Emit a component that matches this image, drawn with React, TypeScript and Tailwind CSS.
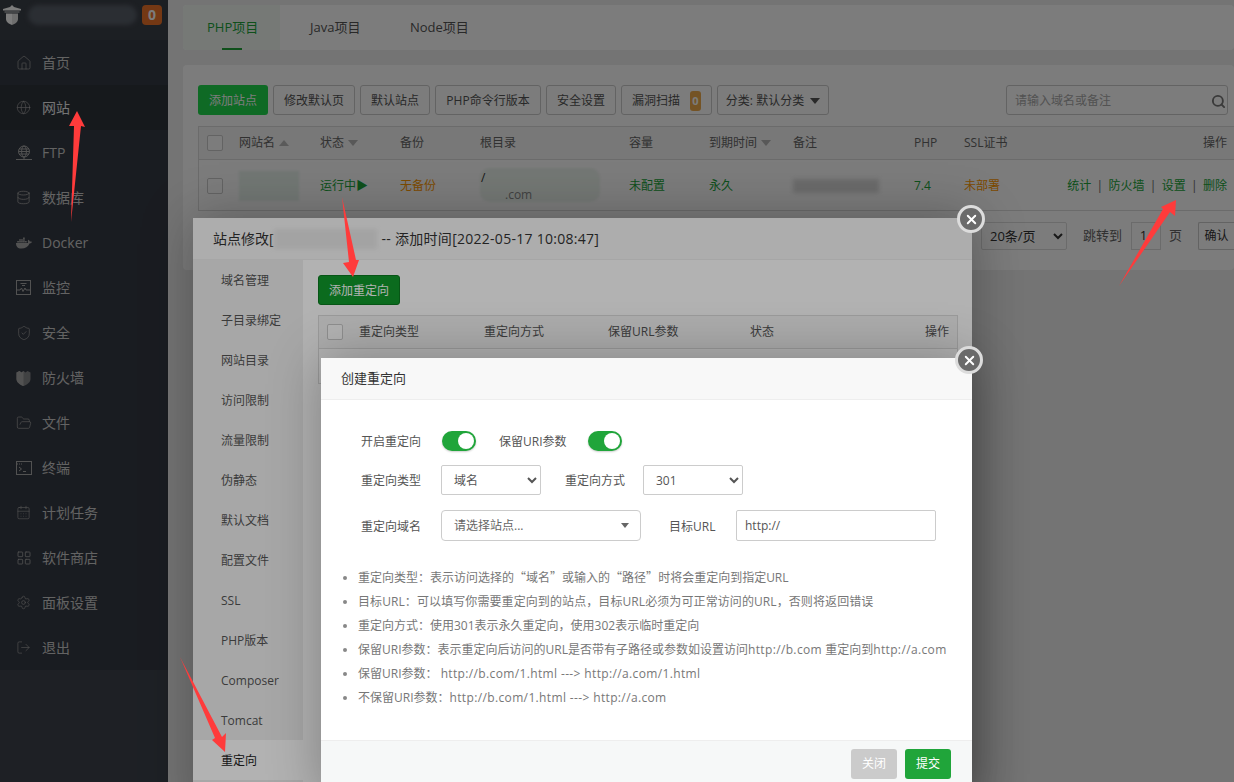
import { CalendarDays, Database, FolderOpen, Globe, House, LayoutGrid, LogOut, Search, Settings, ShieldCheck, X } from "lucide-react"
import { FaDocker } from "react-icons/fa6"
import type { ReactNode } from "react"

function FtpIcon() {
  return (
    <svg width="16" height="16" viewBox="0 0 16 16" fill="none" stroke="currentColor" strokeWidth="1">
      <circle cx="8" cy="6.5" r="5.5" />
      <ellipse cx="8" cy="6.5" rx="2.4" ry="5.5" />
      <path d="M2.5 6.5h11M3.2 4h9.6M3.2 9h9.6M8 12v2M0 14.5h16" />
    </svg>
  )
}

function MonitorIcon() {
  return (
    <svg width="15" height="15" viewBox="0 0 15 15" fill="none" stroke="currentColor" strokeWidth="1">
      <rect x="0.5" y="0.5" width="14" height="14" />
      <path d="M1 10h3l1.5-2 1.5 3.5L9 8l1 2h4M4.5 3.5h6M6 5.5h3" />
    </svg>
  )
}

function FirewallIcon() {
  return (
    <svg width="15" height="16" viewBox="0 0 15 16" fill="currentColor">
      <path d="M0.5 2.5 3.5 1l2 1.500L7.500 1l2 1.500L11.500 1l3 1.500V9c0 3-3 5.500-7 7-4-1.500-7-4-7-7z" opacity="0.7" />
      <path d="M0.5 2.500 3.500 1l2 1.500L7.500 1V16c-4-1.500-7-4-7-7z" />
    </svg>
  )
}

function TerminalIcon() {
  return (
    <svg width="16" height="14" viewBox="0 0 16 14" fill="none" stroke="currentColor" strokeWidth="1">
      <rect x="0.500" y="0.500" width="15" height="13" />
      <path d="M1 3h1M3 3h1M5 3h1" />
      <path d="M3 6l2.500 2L3 10M7 10.500h3" />
    </svg>
  )
}

function Logo() {
  return (
    <svg width="18" height="20" viewBox="0 0 18 20">
      <path d="M9 0 11 2 18 4v1.500H0V4l7-2z" fill="#ffffff" />
      <path d="M1.500 6.500h15v1h-15z" fill="#dddddd" />
      <path d="M3 8.500h6V20c-3-1-6-3-6-6z" fill="#ffffff" />
      <path d="M9 8.500h6V14c0 3-3 5-6 6z" fill="#e2e2e2" />
    </svg>
  )
}

const menu: { label: string; icon: ReactNode }[] = [
  { label: "首页", icon: <House size={16} strokeWidth={1} /> },
  { label: "网站", icon: <Globe size={15} strokeWidth={1} /> },
  { label: "FTP", icon: <FtpIcon /> },
  { label: "数据库", icon: <Database size={15} strokeWidth={1.2} /> },
  { label: "Docker", icon: <FaDocker size={16} /> },
  { label: "监控", icon: <MonitorIcon /> },
  { label: "安全", icon: <ShieldCheck size={16} strokeWidth={1} /> },
  { label: "防火墙", icon: <FirewallIcon /> },
  { label: "文件", icon: <FolderOpen size={16} strokeWidth={1} /> },
  { label: "终端", icon: <TerminalIcon /> },
  { label: "计划任务", icon: <CalendarDays size={15} strokeWidth={1} /> },
  { label: "软件商店", icon: <LayoutGrid size={16} strokeWidth={1.2} /> },
  { label: "面板设置", icon: <Settings size={15} strokeWidth={1} /> },
  { label: "退出", icon: <LogOut size={15} strokeWidth={1} /> },
]

const siteNav = ["域名管理", "子目录绑定", "网站目录", "访问限制", "流量限制", "伪静态", "默认文档", "配置文件", "SSL", "PHP版本", "Composer", "Tomcat", "重定向"]

function Quote({ children }: { children: string }) {
  return <span className="font-['Noto_Sans_CJK_SC',sans-serif]">{children}</span>
}

function Latin({ children }: { children: string }) {
  return <span className="tracking-[.36px]">{children}</span>
}

const tips: ReactNode[] = [
  <>重定向类型：表示访问选择的<Quote>“</Quote>域名<Quote>”</Quote>或输入的<Quote>“</Quote>路径<Quote>”</Quote>时将会重定向到指定URL</>,
  <span className="tracking-[.09px]">目标URL：可以填写你需要重定向到的站点，目标URL必须为可正常访问的URL，否则将返回错误</span>,
  <>重定向方式：使用301表示永久重定向，使用302表示临时重定向</>,
  <>保留URI参数：表示重定向后访问的URL是否带有子路径或参数如设置访问<Latin>http://b.com</Latin> 重定向到<Latin>http://a.com</Latin></>,
  <>保留URI参数： <Latin>http://b.com/1.html ---&gt; http://a.com/1.html</Latin></>,
  <>不保留URI参数：<Latin>http://b.com/1.html ---&gt; http://a.com</Latin></>,
]

function Caret() {
  return <span className="ml-1 inline-block border-x-[5px] border-t-[6px] border-x-transparent border-t-[#b5b5b5]" />
}

function ToolButton({ children, className = "" }: { children: ReactNode; className?: string }) {
  return (
    <button className={`flex h-[30px] items-center justify-center rounded-[3px] border border-[#ccc] bg-white pt-[2px] text-xs text-[#555] ${className}`}>
      {children}
    </button>
  )
}

function Checkbox() {
  return <span className="block size-4 rounded-[2px] border border-[#ccc] bg-white" />
}

function Toggle() {
  return (
    <span className="flex h-5 w-[34px] items-center justify-end rounded-full bg-[#20a53a] pr-0.5 shadow-[0_1px_2px_rgba(0,0,0,.2)]">
      <span className="size-4 rounded-full bg-white" />
    </span>
  )
}

function CloseCircle({ className }: { className: string }) {
  return (
    <div className={`absolute z-10 flex size-7 items-center justify-center rounded-full border-[3px] border-[#dcdcdc] bg-[#6a6a6a] text-white ${className}`}>
      <X size={15} strokeWidth={3} />
    </div>
  )
}

function Arrows() {
  return (
    <svg className="pointer-events-none absolute inset-0 z-30" width="1234" height="782" fill="#ff3b3b">
      <polygon points="77,111 85,127 81,126 71,222 74,126 69,126" />
      <polygon points="353,277 359,260 356,260 342,197 349,262 343,263" />
      <polygon points="1176,200 1175,216 1170,212 1119,286 1163,209 1161,207" />
      <polygon points="225,752 226,733 222,737 180,657 215,738 212,740" />
    </svg>
  )
}

export default function App() {
  return (
    <div className="relative flex h-[782px] w-[1234px] overflow-hidden bg-[#f0f0f0] font-['Open_Sans','Noto_Sans_CJK_SC',sans-serif] text-xs text-[#666]">
      {/* sidebar */}
      <aside className="relative flex w-[168px] shrink-0 flex-col bg-[#363b45] text-[#ccc]">
        <div className="flex h-[40px] items-center bg-[#3c4149] pb-[10px] pl-[3px]">
          <Logo />
          <span className="ml-[7px] h-5 w-[109px] rounded-full bg-[#59606a] blur-[2px]" />
          <span className="ml-[5px] flex size-5 items-center justify-center rounded-[4px] bg-[#f0742b] text-sm font-bold text-white">0</span>
        </div>
        {menu.map((item) => (
          <div key={item.label} className={`flex h-[45px] items-center text-sm ${item.label === "网站" ? "bg-[#2f343b] text-[#eee]" : ""}`}>
            <span className="flex w-[42px] shrink-0 justify-center pl-[5px] text-[#aaa]">{item.icon}</span>
            {item.label}
          </div>
        ))}
        <div className="flex-1 bg-[#3e444e]" />
      </aside>

      {/* main page */}
      <main className="min-w-0 flex-1 pl-[15px] pt-[5px]">
        <div className="flex h-[45px] items-stretch rounded-[4px] bg-white text-[13px] text-[#555]">
          <div className="relative flex w-[97px] items-center rounded-l-[4px] bg-[#f2faf4] pl-[24px] text-[#20a53a]">
            PHP项目
            <span className="absolute bottom-0 left-[39px] h-0.5 w-5 bg-[#20a53a]" />
          </div>
          <span className="flex w-[100px] items-center pl-[30px]">Java项目</span>
          <span className="flex w-[100px] items-center pl-[30px]">Node项目</span>
        </div>

        <section className="mt-[15px] h-[205px] rounded-[4px] bg-white pl-[15px] pt-[20px]">
          <div className="flex items-center gap-[5px]">
            <button className="h-[30px] w-[70px] rounded-[3px] bg-[#20da4e] pt-[2px] text-xs text-white">添加站点</button>
            <ToolButton className="w-[82px]">修改默认页</ToolButton>
            <ToolButton className="w-[70px]">默认站点</ToolButton>
            <ToolButton className="w-[106px]">PHP命令行版本</ToolButton>
            <ToolButton className="w-[70px]">安全设置</ToolButton>
            <ToolButton className="w-[91px] gap-[10px]">
              漏洞扫描
              <span className="flex h-[20px] w-[11px] items-center justify-center rounded-[3px] bg-[#f0ad4e] text-[11px] font-bold text-white">0</span>
            </ToolButton>
            <ToolButton className="w-[112px] gap-1 text-[#333]">
              分类: 默认分类
              <span className="ml-0.5 border-x-[5px] border-t-[6px] border-x-transparent border-t-[#555]" />
            </ToolButton>
            <div className="ml-auto mr-[6px] flex h-[30px] w-[222px] items-center justify-between rounded-[3px] border border-[#ccc] bg-white pl-2 pr-[1px] pt-[2px] text-[#aaa]">
              请输入域名或备注
              <Search size={15} strokeWidth={3} className="text-[#777]" />
            </div>
          </div>

          <div className="mt-[11px] border-y border-l border-[#ddd]">
            <div className="flex h-[33px] items-center border-b border-[#ddd] bg-[#f6f6f6]">
              <span className="w-[40px] pl-[8px]"><Checkbox /></span>
              <span className="flex w-[81px] items-center">网站名<span className="ml-1 border-x-[5px] border-b-[6px] border-x-transparent border-b-[#bbb]" /></span>
              <span className="flex w-[80px] items-center">状态<Caret /></span>
              <span className="w-[80px]">备份</span>
              <span className="w-[149px]">根目录</span>
              <span className="w-[80px]">容量</span>
              <span className="flex w-[84px] items-center">到期时间<Caret /></span>
              <span className="w-[121px]">备注</span>
              <span className="w-[50px]">PHP</span>
              <span>SSL证书</span>
              <span className="ml-auto pr-[7px]">操作</span>
            </div>
            <div className="flex h-[50px] items-center bg-white pt-[2px]">
              <span className="w-[40px] pl-[8px]"><Checkbox /></span>
              <span className="w-[81px]"><span className="block h-[30px] w-[60px] bg-[#eaf5ee] blur-[1px]" /></span>
              <span className="w-[80px] text-[#20a53a]">运行中▶</span>
              <span className="w-[80px] text-[#ff9900]">无备份</span>
              <span className="relative h-[40px] w-[149px]">
                <span className="absolute left-0 top-[2px] h-[34px] w-[120px] rounded-[10px] bg-[#eef6f0] blur-[1px]" />
                <span className="absolute left-[1px] top-[4px] text-[#333]">/</span>
                <span className="absolute left-[25px] top-[21px] text-[#888]">.com</span>
              </span>
              <span className="w-[80px] text-[#20a53a]">未配置</span>
              <span className="w-[84px] text-[#20a53a]">永久</span>
              <span className="w-[121px]"><span className="block h-[14px] w-[86px] bg-[#dcdcdc] blur-[2px]" /></span>
              <span className="w-[50px] text-[#20a53a]">7.4</span>
              <span className="text-[#ff9900]">未部署</span>
              <span className="ml-auto flex gap-[5.33px] pr-[7px] text-[#20a53a]">
                统计<span className="text-[#666]">|</span>防火墙<span className="text-[#666]">|</span>设置<span className="text-[#666]">|</span>删除
              </span>
            </div>
          </div>

          <div className="mt-[11px] flex items-center justify-end overflow-hidden text-[#666]">
            <select className="h-[28px] w-[86px] rounded-[2px] border border-[#ddd] bg-white pl-1 text-[13px] text-[#333]" defaultValue="20条/页">
              <option>20条/页</option>
            </select>
            <span className="ml-4 text-[13px]">跳转到</span>
            <span className="ml-[9px] flex h-[28px] w-[30px] items-center justify-center border border-[#ddd] pr-[5px] text-[13px] text-[#333]">1</span>
            <span className="ml-2 text-[13px]">页</span>
            <span className="ml-4 flex h-[28px] w-[36px] shrink-0 items-center justify-center rounded-l-[2px] border border-r-0 border-[#ccc] text-[#333]">确认</span>
          </div>
        </section>
      </main>

      <div className="absolute inset-0 bg-black/30" />

      {/* 站点修改 */}
      <div className="absolute left-[193px] top-[218px] h-[600px] w-[779px] bg-white text-[#555] shadow-[1px_1px_50px_rgba(0,0,0,.3)]">
        <CloseCircle className="-right-[13px] -top-[13px]" />
        <header className="flex h-[42px] items-center border-b border-[#eee] bg-[#f8f8f8] pl-[20px] text-sm text-[#333]">
          站点修改[<span className="h-5 w-[103px] bg-[#eaeaea] blur-[2px]" />
          <span className="ml-[5px] tracking-[.27px]">-- 添加时间[2022-05-17 10:08:47]</span>
        </header>
        <div className="flex h-[558px]">
          <nav className="w-[110px] shrink-0 bg-[#f0f0f0]">
            {siteNav.map((item) => (
              <div key={item} className={`flex h-10 items-center pl-7 pt-[2px] ${item === "重定向" ? "bg-white text-[#222]" : ""}`}>{item}</div>
            ))}
          </nav>
          <div className="flex-1 pl-[15px] pr-[14px] pt-[15px]">
            <button className="h-[30px] w-[82px] rounded-[3px] border border-[#0b7a20] bg-[#109a2b] pt-[1px] text-xs text-white">添加重定向</button>
            <div className="mt-[10px] h-[69px] border border-[#ddd]">
              <div className="flex h-[33px] items-center border-b border-[#ddd] bg-[#f6f6f6]">
                <span className="w-[40px] pl-[8px]"><Checkbox /></span>
                <span className="w-[125px]">重定向类型</span>
                <span className="w-[124px]">重定向方式</span>
                <span className="w-[142px]">保留URL参数</span>
                <span>状态</span>
                <span className="ml-auto pr-2">操作</span>
              </div>
            </div>
          </div>
        </div>
      </div>

      <div className="absolute inset-0 bg-black/30" />

      {/* 创建重定向 */}
      <div className="absolute left-[321px] top-[358px] z-20 h-[440px] w-[651px] bg-white text-[#555] shadow-[1px_1px_50px_rgba(0,0,0,.3)]">
        <CloseCircle className="-right-[11px] -top-[12px]" />
        <header className="flex h-[42px] items-center border-b border-[#eee] bg-[#f8f8f8] pl-[20px] text-[13px] text-[#333]">创建重定向</header>
        <div className="h-[340px] pl-[40px] pt-[31px]">
          <div className="flex h-5 items-center">
            <span className="w-[81px] pt-[2px]">开启重定向</span>
            <Toggle />
            <span className="ml-[23px] w-[89px] pt-[2px]">保留URI参数</span>
            <Toggle />
          </div>
          <div className="mt-[14px] flex items-center">
            <span className="w-[80px] pt-[2px]">重定向类型</span>
            <select className="h-[30px] w-[100px] rounded-[2px] border border-[#ccc] bg-white pl-2 text-xs text-[#555]" defaultValue="域名">
              <option>域名</option>
            </select>
            <span className="ml-6 w-[78px] pt-[2px]">重定向方式</span>
            <select className="h-[30px] w-[100px] rounded-[2px] border border-[#ccc] bg-white pl-2 text-xs text-[#555]" defaultValue="301">
              <option>301</option>
            </select>
          </div>
          <div className="mt-[15px] flex items-center">
            <span className="w-[80px] pt-[2px]">重定向域名</span>
            <div className="flex h-[31px] w-[200px] items-center justify-between rounded-[4px] border border-[#ccc] pl-3 pr-[11px] text-[#666]">
              请选择站点...
              <span className="border-x-[4px] border-t-[5px] border-x-transparent border-t-[#666]" />
            </div>
            <span className="ml-7 w-[67px] pt-[2px]">目标URL</span>
            <div className="flex h-[31px] w-[200px] items-center rounded-[2px] border border-[#ccc] pl-2 text-[#555]">http://</div>
          </div>
          <ul className="-ml-[20px] mt-[24px] list-disc pl-[17px] leading-6 text-[#777] marker:text-[#888]">
            {tips.map((tip, i) => (
              <li key={i} className="whitespace-nowrap">{tip}</li>
            ))}
          </ul>
        </div>
        <footer className="flex h-[58px] justify-end gap-2 border-t border-[#eee] bg-[#f6f8f8] pr-[21px] pt-2">
          <button className="h-[30px] w-[46px] rounded-[3px] bg-[#cbcbcb] text-xs text-white">关闭</button>
          <button className="h-[30px] w-[46px] rounded-[3px] bg-[#20a53a] text-xs text-white">提交</button>
        </footer>
      </div>

      <Arrows />
    </div>
  )
}
